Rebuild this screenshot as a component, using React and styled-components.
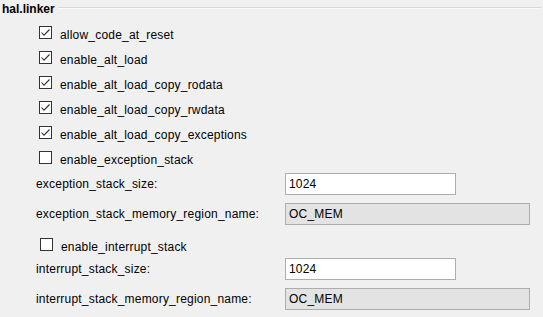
import React from 'react'
import styled, { createGlobalStyle } from 'styled-components'

const GlobalStyle = createGlobalStyle`
  html, body {
    margin: 0;
    padding: 0;
    background: #f0f0f0;
  }
  body {
    font-family: "Liberation Sans", Arial, sans-serif;
    font-size: 12px;
    letter-spacing: 0.2px;
    color: #000;
  }
`

const Panel = styled.div`
  width: 543px;
  height: 317px;
  overflow: hidden;
  background: #f0f0f0;
`

const GroupHeader = styled.div`
  display: flex;
  align-items: flex-start;
  padding: 0 2px 0 2px;
  height: 16px;
`

const GroupTitle = styled.div`
  font-weight: bold;
  line-height: 14px;
  padding-top: 2px;
  letter-spacing: 0;
`

const GroupRule = styled.div`
  flex: 1;
  height: 1px;
  margin: 7px 0 0 3px;
  background: #d7d7d7;
  box-shadow: 0 1px 0 #fafafa;
`

const GroupBody = styled.div`
  display: flex;
  flex-direction: column;
  padding-top: 4px;
`

const CheckRow = styled.label`
  display: flex;
  align-items: center;
  height: 25px;
  padding-left: ${p => p.$indent || 39}px;
  margin-top: ${p => p.$top || 0}px;
`

const Box = styled.span`
  width: 13px;
  height: 13px;
  box-sizing: border-box;
  border: 1px solid #333;
  background: #fff;
  display: flex;
  align-items: center;
  justify-content: center;
  flex-shrink: 0;
`

const CheckText = styled.span`
  margin-left: 8px;
  line-height: 14px;
  padding-top: 5px;
`

const FieldRow = styled.div`
  display: grid;
  grid-template-columns: 249px auto;
  align-items: center;
  padding-left: 36px;
  height: 22px;
  margin-top: ${p => p.$top}px;
`

const FieldLabel = styled.span`
  line-height: 14px;
`

const Field = styled.input`
  box-sizing: border-box;
  width: ${p => p.$width}px;
  height: 22px;
  margin: 0;
  padding: 0 3px;
  border: 1px solid #adadad;
  border-radius: 0;
  background: ${p => (p.disabled ? '#e3e3e3' : '#fff')};
  font: 12px "Liberation Sans", Arial, sans-serif;
  letter-spacing: 0.2px;
  color: #000;
  outline: none;
`

const Check = ({ checked, label, indent, top }) => (
  <CheckRow $indent={indent} $top={top}>
    <Box>
      {checked && (
        <svg width="11" height="11" viewBox="0 0 11 11">
          <path d="M1.5 5.5 L4 8.2 L9.5 2.5" fill="none" stroke="#333" strokeWidth="1.1" />
        </svg>
      )}
    </Box>
    <CheckText>{label}</CheckText>
  </CheckRow>
)

const Input = ({ label, value, disabled, top }) => (
  <FieldRow $top={top}>
    <FieldLabel>{label}</FieldLabel>
    <Field
      readOnly
      disabled={disabled}
      value={value}
      $width={disabled ? 245 : 171}
    />
  </FieldRow>
)

const checks = [
  ['allow_code_at_reset', true],
  ['enable_alt_load', true],
  ['enable_alt_load_copy_rodata', true],
  ['enable_alt_load_copy_rwdata', true],
  ['enable_alt_load_copy_exceptions', true],
  ['enable_exception_stack', false],
]

const App = () => (
  <Panel>
    <GlobalStyle />
    <GroupHeader>
      <GroupTitle>hal.linker</GroupTitle>
      <GroupRule />
    </GroupHeader>
    <GroupBody>
      {checks.map(([label, checked]) => (
        <Check key={label} label={label} checked={checked} />
      ))}
      <Input top={3} label="exception_stack_size:" value="1024" />
      <Input top={8} label="exception_stack_memory_region_name:" value="OC_MEM" disabled />
      <Check top={7} indent={40} label="enable_interrupt_stack" checked={false} />
      <Input top={1} label="interrupt_stack_size:" value="1024" />
      <Input top={8} label="interrupt_stack_memory_region_name:" value="OC_MEM" disabled />
    </GroupBody>
  </Panel>
)

export default App
